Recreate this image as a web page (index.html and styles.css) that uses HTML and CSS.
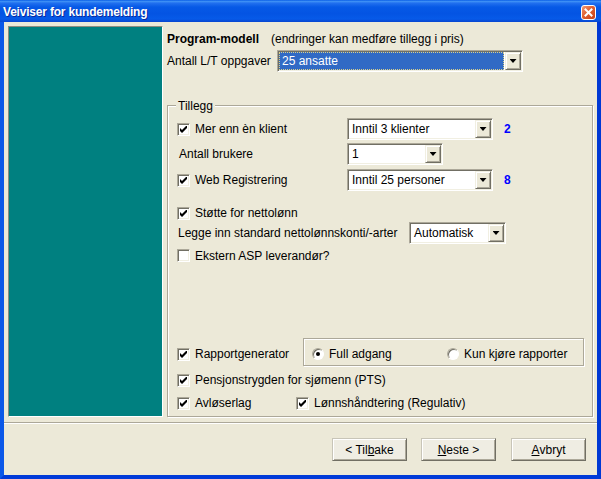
FILE: index.html
```html
<!DOCTYPE html>
<html>
<head>
<meta charset="utf-8">
<title>Veiviser for kundemelding</title>
<link rel="stylesheet" href="styles.css">
</head>
<body>
<div class="window">
  <div class="titlebar">
    <span class="title">Veiviser for kundemelding</span>
    <span class="close"><svg width="13" height="13" viewBox="0 0 13 13"><path d="M3.5 3.5 L9.5 9.5 M9.5 3.5 L3.5 9.5" stroke="#fff" stroke-width="2" stroke-linecap="square"/></svg></span>
  </div>
  <div class="client">
    <div class="main">
      <div class="sidepanel"></div>
      <div class="content">
        <div class="header"><span class="bold">Program-modell</span><span class="note">(endringer kan medføre tillegg i pris)</span></div>
        <div class="model-row">
          <span class="model-label">Antall L/T oppgaver</span>
          <div class="combo combo-model"><span class="combo-text selected">25 ansatte</span><span class="arrow"></span></div>
        </div>
        <div class="group">
          <span class="legend">Tillegg</span>
          <div class="row r1">
            <div class="lbl-col"><span class="cb"><svg width="7" height="7" viewBox="0 0 7 7"><polygon points="0,2 2,4 7,-1 7,2 2,7 0,5" fill="#000"/></svg></span>Mer enn èn klient</div>
            <div class="combo w146"><span class="combo-text">Inntil 3 klienter</span><span class="arrow"></span></div>
            <span class="count">2</span>
          </div>
          <div class="row r2">
            <div class="lbl-col plain">Antall brukere</div>
            <div class="combo w96"><span class="combo-text">1</span><span class="arrow"></span></div>
          </div>
          <div class="row r3">
            <div class="lbl-col"><span class="cb"><svg width="7" height="7" viewBox="0 0 7 7"><polygon points="0,2 2,4 7,-1 7,2 2,7 0,5" fill="#000"/></svg></span>Web Registrering</div>
            <div class="combo w146"><span class="combo-text">Inntil 25 personer</span><span class="arrow"></span></div>
            <span class="count">8</span>
          </div>
          <div class="row r4">
            <div class="lbl-col"><span class="cb"><svg width="7" height="7" viewBox="0 0 7 7"><polygon points="0,2 2,4 7,-1 7,2 2,7 0,5" fill="#000"/></svg></span>Støtte for nettolønn</div>
          </div>
          <div class="row r5">
            <div class="lg-label">Legge inn standard nettolønnskonti/-arter</div>
            <div class="combo w97"><span class="combo-text">Automatisk</span><span class="arrow"></span></div>
          </div>
          <div class="row r6">
            <div class="lbl-col"><span class="cb"></span>Ekstern ASP leverandør?</div>
          </div>
          <div class="row r8">
            <div class="rap-label"><span class="cb"><svg width="7" height="7" viewBox="0 0 7 7"><polygon points="0,2 2,4 7,-1 7,2 2,7 0,5" fill="#000"/></svg></span>Rapportgenerator</div>
            <div class="radiobox">
              <div class="opt1"><span class="radio on"></span>Full adgang</div>
              <div class="opt2"><span class="radio"></span>Kun kjøre rapporter</div>
            </div>
          </div>
          <div class="row r9">
            <div class="check-item"><span class="cb"><svg width="7" height="7" viewBox="0 0 7 7"><polygon points="0,2 2,4 7,-1 7,2 2,7 0,5" fill="#000"/></svg></span>Pensjonstrygden for sjømenn (PTS)</div>
          </div>
          <div class="row r10">
            <div class="check-item avl"><span class="cb"><svg width="7" height="7" viewBox="0 0 7 7"><polygon points="0,2 2,4 7,-1 7,2 2,7 0,5" fill="#000"/></svg></span>Avløserlag</div>
            <div class="check-item"><span class="cb"><svg width="7" height="7" viewBox="0 0 7 7"><polygon points="0,2 2,4 7,-1 7,2 2,7 0,5" fill="#000"/></svg></span>Lønnshåndtering (Regulativ)</div>
          </div>
        </div>
      </div>
    </div>
    <div class="separator"></div>
    <div class="footer">
      <button class="btn">&lt; Til<u>b</u>ake</button>
      <button class="btn btn-next"><u>N</u>este &gt;</button>
      <button class="btn btn-cancel"><u>A</u>vbryt</button>
    </div>
  </div>
</div>
</body>
</html>
```
FILE: styles.css
```css
* { box-sizing: border-box; }
body {
  margin: 0;
  font-family: "Liberation Sans", Arial, sans-serif;
  font-size: 12px;
  color: #000;
  background: #ece9d8;
}
.window {
  width: 601px;
  height: 479px;
  display: flex;
  flex-direction: column;
  overflow: hidden;
}
.titlebar {
  height: 22px;
  flex: none;
  display: flex;
  justify-content: space-between;
  align-items: flex-start;
  padding: 3px 5px 0 3px;
  background: linear-gradient(180deg, #0a5fe7 0%, #3d8ff5 7%, #2170ef 14%, #0659e6 32%, #0454e3 62%, #075ae8 86%, #0846d0 100%);
}
.title {
  color: #fff;
  font-weight: bold;
  font-size: 12px;
  letter-spacing: -0.2px;
  line-height: 19px;
  text-shadow: 1px 1px 0 #0a2a9c;
}
.close {
  width: 15px;
  height: 15px;
  margin-top: 2px;
  border: 1px solid #fff;
  border-radius: 3px;
  background: linear-gradient(135deg, #f09a78 0%, #e0602f 45%, #c8421a 100%);
  display: flex;
  align-items: center;
  justify-content: center;
}
.client {
  flex: 1;
  display: flex;
  flex-direction: column;
  background: #ece9d8;
  border-left: 4px solid #0b58e8;
  border-right: 4px solid #0038d4;
  border-bottom: 4px solid #003ad8;
}
.main {
  height: 400px;
  flex: none;
  display: flex;
  padding: 4px 0 0 4px;
}
.sidepanel {
  width: 155px;
  height: 391px;
  flex: none;
  background: #008080;
  border: 1px solid;
  border-color: #8f8c80 #fff #fff #8f8c80;
}
.content {
  margin-left: 4px;
  width: 426px;
  display: flex;
  flex-direction: column;
}
.header {
  margin-top: 5px;
  height: 16px;
  display: flex;
  align-items: center;
  white-space: nowrap;
}
.bold { font-weight: bold; }
.note { margin-left: 12px; }
.model-row {
  margin-top: 3px;
  height: 22px;
  display: flex;
  align-items: center;
}
.model-label { width: 110px; white-space: nowrap; }
.combo {
  height: 22px;
  display: flex;
  flex: none;
  padding: 1px;
  background: #fff;
  border: 1px solid;
  border-color: #aca899 #fff #fff #aca899;
  box-shadow: inset 1px 1px 0 #716f64, inset -1px -1px 0 #f1efe2;
}
.combo-model { width: 246px; }
.w146 { width: 146px; }
.w96 { width: 96px; }
.w97 { width: 97px; }
.combo-text {
  flex: 1;
  padding-left: 3px;
  line-height: 18px;
  white-space: nowrap;
  overflow: hidden;
}
.combo-text.selected {
  background: #316ac5;
  color: #fff;
  border: 1px dotted #d8cf8a;
  line-height: 16px;
  padding-left: 2px;
  margin-right: 1px;
}
.arrow {
  width: 16px;
  flex: none;
  background: #ece9d8;
  border: 1px solid;
  border-color: #f1efe2 #716f64 #716f64 #f1efe2;
  box-shadow: inset 1px 1px 0 #fff, inset -1px -1px 0 #aca899;
  display: flex;
  align-items: center;
  justify-content: center;
}
.arrow::after {
  content: "";
  width: 7px;
  height: 4px;
  background: #000;
  clip-path: polygon(0 0, 7px 0, 3.5px 4px);
}
.cb {
  width: 13px;
  height: 13px;
  flex: none;
  margin-right: 5px;
  background: #fff;
  border: 1px solid;
  border-color: #aca899 #fff #fff #aca899;
  box-shadow: inset 1px 1px 0 #716f64, inset -1px -1px 0 #f1efe2;
  display: flex;
  align-items: center;
  justify-content: center;
}
.radio {
  width: 12px;
  height: 12px;
  flex: none;
  margin-right: 5px;
  border-radius: 50%;
  background: #fff;
  border: 1px solid;
  border-color: #aca899 #fff #fff #aca899;
  box-shadow: inset 1px 1px 0 #716f64;
  display: flex;
  align-items: center;
  justify-content: center;
}
.radio.on::after {
  content: "";
  width: 4px;
  height: 4px;
  border-radius: 50%;
  background: #000;
}
.group {
  position: relative;
  margin-top: 33px;
  width: 426px;
  border: 1px solid #aca899;
  box-shadow: inset 1px 1px 0 #fff, 1px 1px 0 #fff;
  padding: 0 0 4px 9px;
  display: flex;
  flex-direction: column;
}
.legend {
  position: absolute;
  left: 8px;
  top: -7px;
  padding: 0 2px;
  background: #ece9d8;
  line-height: 14px;
}
.row {
  display: flex;
  align-items: center;
  flex: none;
  white-space: nowrap;
}
.r1 { margin-top: 12px; height: 22px; }
.r2 { margin-top: 3px; height: 22px; }
.r3 { margin-top: 4px; height: 22px; }
.r4 { margin-top: 13px; height: 18px; }
.r5 { margin-top: 0; height: 22px; }
.r6 { margin-top: 2px; height: 19px; }
.r8 { margin-top: 72px; height: 30px; align-items: flex-start; }
.r9 { margin-top: 4px; height: 18px; }
.r10 { margin-top: 5px; height: 18px; }
.lbl-col {
  width: 170px;
  display: flex;
  align-items: center;
}
.lbl-col.plain { padding-left: 2px; }
.count {
  margin-left: 11px;
  font-weight: bold;
  color: #0000ff;
}
.lg-label { width: 232px; padding-left: 1px; }
.rap-label {
  width: 126px;
  margin-top: 10px;
  height: 14px;
  display: flex;
  align-items: center;
}
.radiobox {
  width: 281px;
  height: 28px;
  margin-top: 1px;
  border: 1px solid #aca899;
  box-shadow: inset 1px 1px 0 #fff, 1px 1px 0 #fff;
  display: flex;
  align-items: center;
  padding: 3px 0 0 8px;
}
.opt1 { width: 135px; display: flex; align-items: center; }
.opt2 { display: flex; align-items: center; }
.check-item { display: flex; align-items: center; }
.avl { width: 119px; }
.separator {
  height: 2px;
  flex: none;
  border-top: 1px solid #aca899;
  border-bottom: 1px solid #fff;
}
.footer {
  display: flex;
  justify-content: flex-end;
  padding: 14px 11px 0 0;
}
.btn {
  width: 75px;
  height: 23px;
  margin: 0 0 0 14px;
  padding: 0;
  font: inherit;
  color: #000;
  background: #efede3;
  border: 1px solid;
  border-color: #c8c5b8 #716f64 #716f64 #c8c5b8;
  box-shadow: inset 1px 1px 0 #fff, inset -1px -1px 0 #aca899;
  display: flex;
  align-items: center;
  justify-content: center;
}
.btn-cancel { margin-left: 15px; }
```
